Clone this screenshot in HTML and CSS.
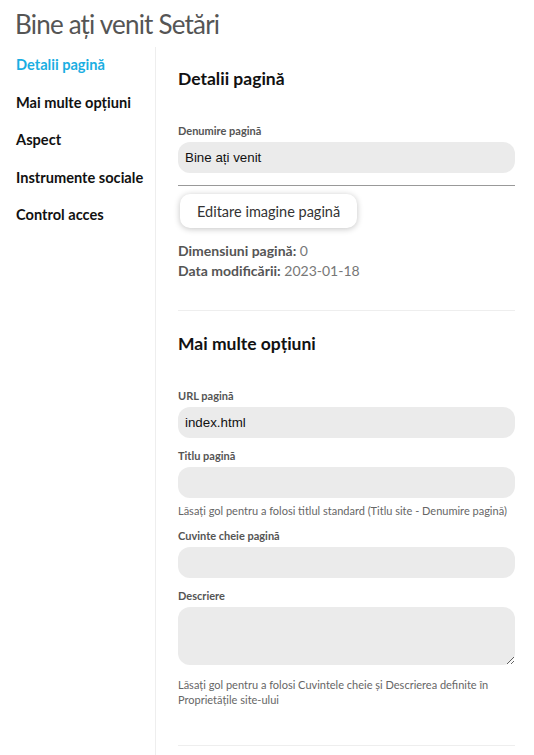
FILE: index.html
```html
<!DOCTYPE html>
<html lang="ro">
<head>
<meta charset="utf-8">
<title>Bine ați venit Setări</title>
<link rel="stylesheet" href="styles.css">
</head>
<body>
<h1 class="page-title">Bine ați venit Setări</h1>
<div class="layout">
  <nav class="sidebar">
    <a class="nav-item active">Detalii pagină</a>
    <a class="nav-item">Mai multe opțiuni</a>
    <a class="nav-item">Aspect</a>
    <a class="nav-item">Instrumente sociale</a>
    <a class="nav-item">Control acces</a>
  </nav>
  <main class="main">
    <section class="section section-details">
      <h2 class="section-title">Detalii pagină</h2>
      <label class="field-label">Denumire pagină</label>
      <input class="text-input" type="text" value="Bine ați venit">
      <div class="rule"></div>
      <button class="btn" type="button">Editare imagine pagină</button>
      <div class="info">
        <div class="info-line"><span class="info-key">Dimensiuni pagină:</span> <span class="info-val">0</span></div>
        <div class="info-line"><span class="info-key">Data modificării:</span> <span class="info-val">2023-01-18</span></div>
      </div>
    </section>
    <section class="section section-more">
      <h2 class="section-title">Mai multe opțiuni</h2>
      <div class="field">
        <label class="field-label">URL pagină</label>
        <input class="text-input" type="text" value="index.html">
      </div>
      <div class="field">
        <label class="field-label">Titlu pagină</label>
        <input class="text-input" type="text" value="">
        <p class="help">Lăsați gol pentru a folosi titlul standard (Titlu site - Denumire pagină)</p>
      </div>
      <div class="field">
        <label class="field-label">Cuvinte cheie pagină</label>
        <input class="text-input" type="text" value="">
      </div>
      <div class="field">
        <label class="field-label">Descriere</label>
        <textarea class="text-area"></textarea>
        <p class="help help-wide">Lăsați gol pentru a folosi Cuvintele cheie și Descrierea definite în Proprietățile site-ului</p>
      </div>
    </section>
  </main>
</div>
</body>
</html>
```
FILE: styles.css
```css
* { box-sizing: border-box; }

html, body {
  margin: 0;
  padding: 0;
  background: #fff;
}

body {
  font-family: Lato, "Open Sans", sans-serif;
  color: #111;
}

.page-title {
  margin: 0 0 6px;
  padding: 7px 15px 0;
  font-size: 26px;
  letter-spacing: -0.8px;
  line-height: 34px;
  font-weight: 400;
  color: #555;
}

.layout {
  display: flex;
  align-items: stretch;
  min-height: 708px;
}

.sidebar {
  width: 156px;
  flex: 0 0 156px;
  border-right: 1px solid #eee;
  padding: 8px 0 0 16px;
  display: flex;
  flex-direction: column;
  gap: 17.5px;
}

.nav-item {
  display: block;
  font-size: 14.6px;
  line-height: 20px;
  font-weight: 700;
  color: #111;
  text-decoration: none;
}

.nav-item.active {
  color: #1aaee2;
}

.main {
  flex: 1;
  padding: 0 19px 0 22px;
}

.section {
  border-bottom: 1px solid #eee;
}

.section-details {
  padding: 21px 0 29px;
}

.section-more {
  padding: 22px 0 38px;
}

.section-title {
  margin: 0 0 34px;
  font-size: 17.5px;
  line-height: 22px;
  font-weight: 700;
  color: #111;
}

.field-label {
  display: block;
  font-size: 11px;
  line-height: 14px;
  font-weight: 700;
  color: #555;
  margin-bottom: 4px;
}

.text-input {
  display: block;
  width: 100%;
  height: 31px;
  border: none;
  border-radius: 12px;
  background: #ebebeb;
  padding: 0 7px;
  font-family: "Liberation Sans", Arial, sans-serif;
  font-size: 13.333px;
  color: #111;
  outline: none;
}

.text-area {
  display: block;
  width: 100%;
  height: 58px;
  border: none;
  border-radius: 12px;
  background: #ebebeb;
  padding: 6px 7px;
  font-family: "Liberation Sans", Arial, sans-serif;
  font-size: 13.333px;
  resize: both;
  outline: none;
}

.rule {
  margin-top: 12px;
  border-top: 1px solid #999;
}

.btn {
  display: block;
  margin: 8px 0 0 2px;
  height: 34px;
  padding: 0 17px;
  border: none;
  border-radius: 10px;
  background: #fff;
  box-shadow: 0 1px 6px rgba(0, 0, 0, 0.24);
  font-family: Lato, sans-serif;
  font-size: 14.5px;
  color: #333;
}

.info {
  margin-top: 13px;
}

.info-line {
  font-size: 14px;
  line-height: 20px;
}

.info-key {
  font-weight: 700;
  color: #555;
}

.info-val {
  color: #777;
}

.field {
  margin-bottom: 11px;
}

.field:last-child {
  margin-bottom: 0;
}

.help {
  margin: 5px 0 0;
  font-size: 11px;
  line-height: 15px;
  color: #666;
}

.help-wide {
  margin-top: 12px;
}
```
